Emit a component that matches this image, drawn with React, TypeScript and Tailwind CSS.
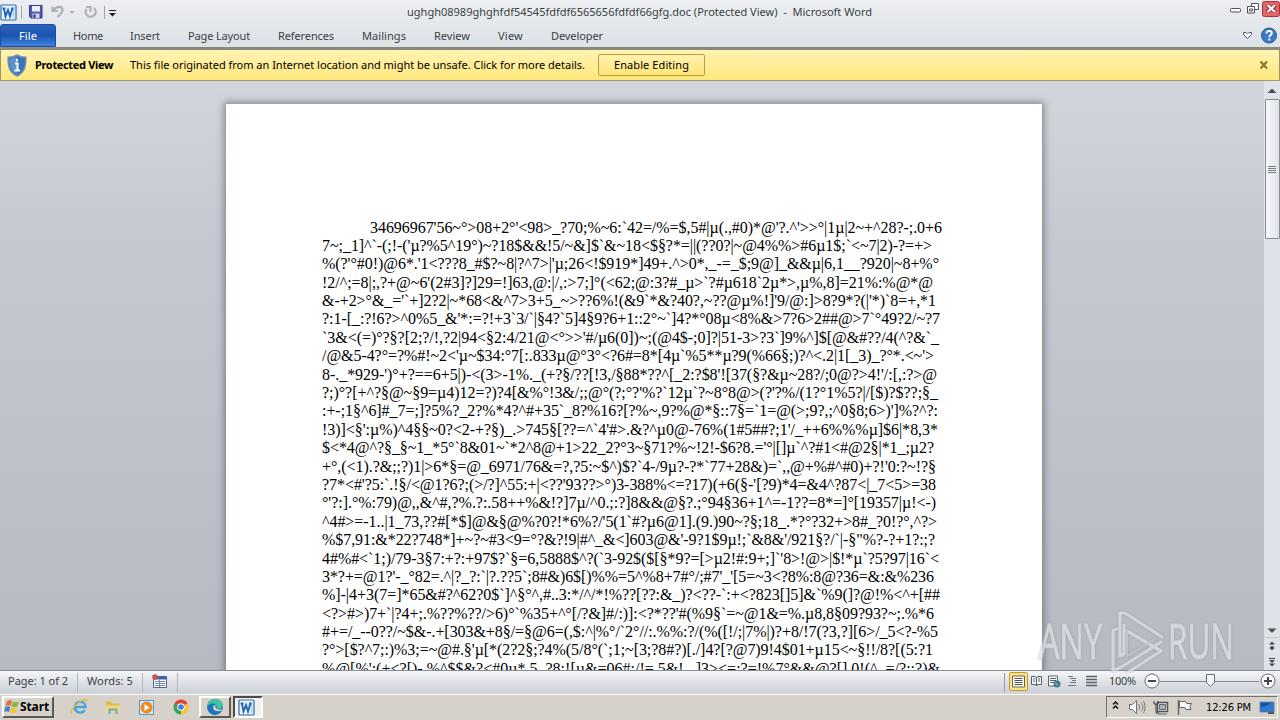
import React, { useLayoutEffect, useRef, useState } from 'react';

interface FitProps {
  text: string;
  width: number;
  className?: string;
}

// Tracks a single line of text so that it fills the given width
const Fit: React.FC<FitProps> = ({ text, width, className = '' }) => {
  const ref = useRef<HTMLSpanElement>(null);
  const [spacing, setSpacing] = useState(0);

  useLayoutEffect(() => {
    if (!ref.current) return;
    const natural = ref.current.getBoundingClientRect().width;
    setSpacing((width - natural) / text.length);
  }, [text, width]);

  return (
    <span
      ref={ref}
      className={`inline-block shrink-0 whitespace-pre ${className}`}
      style={{ letterSpacing: `${spacing}px` }}
    >
      {text}
    </span>
  );
};

interface Line {
  text: string;
  width: number;
}

const LINES: Line[] = [
  { text: "34696967'56~°>08+2°'<98>_?70;%~6:`42=/%=$,5#|µ(.,#0)*@'?.^'>>°|1µ|2~+^28?-;.0+6", width: 572 },
  { text: "7~;_1]^`-(;!-('µ?%5^19°)~?18$&&!5/~&]$`&~18<$§?*=||(??0?|~@4%%>#6µ1$;`<~7|2)-?=+>", width: 610 },
  { text: "%(?'°#0!)@6*.'1<???8_#$?~8|?^7>|'µ;26<!$919*]49+.^>0*,_-=_$;9@]_&&µ|6,1__?920|~8+%°", width: 617 },
  { text: "!2/^;=8|;,?+@~6'(2#3]?]29=!]63,@:|/,:>7;]°(<62;@:3?#_µ>`?#µ618`2µ*>,µ%,8]=21%:%@*@", width: 611 },
  { text: "&-+2>°&_='`+]2?2|~*68<&^7>3+5_~>??6%!(&9`*&?40?,~??@µ%!]'9/@:]>8?9*?(|'*)`8=+,*1", width: 614 },
  { text: "?:1-[_:?!6?>^0%5_&'*:=?!+3`3/`|§4?`5]4§9?6+1::2°~`]4?*°08µ<8%&>7?6>2##@>7`°49?2/~?7", width: 618 },
  { text: "`3&<(=)°?§?[2;?/!,?2|94<§2:4/21@<°>>'#/µ6(0])~;(@4$-;0]?|51-3>?3`]9%^]$[@&#??/4(^?&`_", width: 617 },
  { text: "/@&5-4?°=?%#!~2<'µ~$34:°7[:.833µ@°3°<?6#=8*[4µ`%5**µ?9(%66§;)?^<.2|1[_3)_?°*.<~'>", width: 612 },
  { text: "8-._*929-')°+?==6+5|)-<(3>-1%._(+?§/??[!3,/§88*??^[_2:?$8'![37(§?&µ~28?/;0@?>4!'/:[,:?>@", width: 615 },
  { text: "?;)°?[+^?§@~§9=µ4)12=?)?4[&%°!3&/;;@°(?;°?'%?`12µ`?~8°8@>(?'?%/(1?°1%5?|/[$)?$??;§_", width: 616 },
  { text: ":+-;1§^6]#_7=;]?5%?_2?%*4?^#+35`_8?%16?[?%~,9?%@*§::7§=`1=@(>;9?,;^0§8;6>)']%?^?:", width: 616 },
  { text: "!3)]<§':µ%)^4§§~0?<2-+?§)_.>745§[??=^`4'#>.&?^µ0@-76%(1#5##?;1'/_++6%%%µ]$6|*8,3*", width: 616 },
  { text: "$<*4@^?§_§~1_*5°`8&01~`*2^8@+1>22_2?°3~§71?%~!2!-$6?8.='°|[]µ`^?#1<#@2§|*1_;µ2?", width: 612 },
  { text: "+°,(<1).?&;;?)1|>6*§=@_6971/76&=?,?5:~$^)$?`4-/9µ?-?*`77+28&)=`,,@+%#^#0)+?!'0:?~!?§", width: 614 },
  { text: "?7*<#'?5:`.!§/<@1?6?;(>/?]^55:+|<??'93??>°)3-388%<=?17)(+6(§-'[?9)*4=&4^?87<|_7<5>=38", width: 614 },
  { text: "°'?:].°%:79)@,,&^#,?%.?:.58++%&!?]7µ/^0.;:?]8&&@§?.;°94§36+1^=-1??=8*=]°[19357|µ!<-)", width: 614 },
  { text: "^4#>=-1..|1_73,??#[*$]@&§@%?0?!*6%?/'5(1`#?µ6@1].(9.)90~?§;18_.*?°?32+>8#_?0!?°,^?>", width: 615 },
  { text: "%$7,91:&*22?748*]+~?~#3<9=°?&?!9|#^_&<]603@&'-9?1$9µ!;`&8&'/921§?/`|-§\"%?-?+1?:;?", width: 613 },
  { text: "4#%#<`1;)/79-3§7:+?:+97$?`§=6,5888$^?(`3-92$($[§*9?=[>µ2!#:9+;]`'8>!@>|$!*µ`?5?97|16`<", width: 617 },
  { text: "3*?+=@1?'-_°82=.^|?_?:`|?.??5`;8#&)6$[)%%=5^%8+7#°/;#7'_'[5=~3<?8%:8@?36=&:&%236", width: 612 },
  { text: "%]-|4+3(7=]*65&#?^62?0$`]^§°^,#..3:*/^/*!%??[??:&_)?<??-`:+<?823[]5]&`%9(]?@!%<^+[##", width: 618 },
  { text: "<?>#>)7+`|?4+;.%??%??/>6)°`%35+^°[/?&]#/:)]:<?*??'#(%9§`=~@1&=%.µ8,8§09?93?~;.%*6", width: 612 },
  { text: "#+=/_--0??/~$&-.+[303&+8§/=§@6=(,$:^|%°/`2°//:.%%:?/(%([!/;|7%|)?+8/!7(?3,?][6>/_5<?-%5", width: 616 },
  { text: "?°>[$?^7;:)%3;=~@#.§'µ[*(2?2§;?4%(5/8°(`;1;~[3;?8#?)[./]4?[?@7)9!4$01+µ15<~§!!/8?[(5:?1", width: 611 },
  { text: "%@[%':(+<?[)-.%^$$&?<#0µ*.5_?8:![µ&=06#:/!=.5&!_.]3><=:?=!%7°&&@?[],0!(^_=/?:;?)&", width: 618 },
];

const TABS = [
  { label: 'Home', width: 30, gap: 'ml-[17px]' },
  { label: 'Insert', width: 30, gap: 'ml-[27px]' },
  { label: 'Page Layout', width: 62, gap: 'ml-[28px]' },
  { label: 'References', width: 56, gap: 'ml-[28px]' },
  { label: 'Mailings', width: 44, gap: 'ml-[28px]' },
  { label: 'Review', width: 36, gap: 'ml-[28px]' },
  { label: 'View', width: 25, gap: 'ml-[28px]' },
  { label: 'Developer', width: 52, gap: 'ml-[28px]' },
];

const WordIcon = () => (
  <svg width="17" height="17" viewBox="0 0 17 17" className="shrink-0">
    <rect x="1" y="1" width="15" height="15" rx="1" fill="#eef6fd" stroke="#2f66b0" strokeWidth="1.2" />
    <path d="M13.500 3v11" stroke="#a8c6e8" strokeWidth="1.500" />
    <path d="M2.500 4.500h3M11 4.500h2.500M4 4.500l1.500 8L8 6l2 6.500 2.300-8" fill="none" stroke="#1f66bb" strokeWidth="1.900" />
  </svg>
);

const TitleBar = () => (
  <div className="flex h-6 shrink-0 items-center">
    <WordIcon />
    <div className="ml-1 h-[13px] w-px bg-[#a3a7ab]" />
    <svg width="90" height="22" viewBox="0 0 90 22" className="ml-[4px] mb-px shrink-0">
      <path d="M3.5 4.500h12.500v12.500h-11l-1.500-1.500z" fill="#5657b2" stroke="#35368a" />
      <path d="M6 5h8v5.500h-8z" fill="#edf1fb" />
      <path d="M6.500 12.500h7v4.500h-7z" fill="#c8cee8" />
      <path d="M7.500 13.500h2v3.500h-2z" fill="#33357c" />
      <path d="M26.500 5.500v4.500h5.500M27 9.500c4-5 9.500-4.500 9.500-.5 0 2.500-2 4.500-5 7" fill="none" stroke="#adb0b4" strokeWidth="2.200" />
      <path d="M43.500 10h5l-2.500 3z" fill="#a9acb0" />
      <path d="M60 6h4.500v5M68 7a5 5 0 1 1-7.500 1" fill="none" stroke="#adb0b4" strokeWidth="2.200" />
      <path d="M78.500 5v13" stroke="#a3a7ab" />
      <path d="M83 9.500h7" stroke="#222" />
      <path d="M83 12h7l-3.500 3.500z" fill="#222" />
    </svg>
    <Fit
      text="ughgh08989ghghfdf54545fdfdf6565656fdfdf66gfg.doc (Protected View)  -  Microsoft Word"
      width={465}
      className="ml-[291px] text-[11px] text-[#3b3f44]"
    />
    <svg width="52" height="22" viewBox="0 0 52 22" className="ml-auto shrink-0">
      <rect x="2.500" y="7.500" width="10" height="3.500" rx="1" fill="#fff" stroke="#4d5257" />
      <path d="M23.500 2.500h7v6h-7z" fill="#fff" stroke="#4d5257" />
      <path d="M19.500 5.500h7v6.500h-7z" fill="#fff" stroke="#4d5257" />
      <path d="M21.500 8h3v2h-3z" fill="none" stroke="#4d5257" />
      <rect x="34.500" y=".5" width="17" height="15" rx="2" fill="#e0666b" stroke="#a5343a" />
      <path d="M39 4l8.500 7M47.500 4L39 11" stroke="#8a3034" strokeWidth="4" />
      <path d="M39.500 4l7.500 7M47 4l-7.500 7" stroke="#fff" strokeWidth="2.200" />
    </svg>
  </div>
);

const Ribbon = () => (
  <div className="flex h-[23px] shrink-0 items-center text-[11px] text-[#3b3f44]">
    <div className="flex h-full w-[56px] items-center justify-center rounded-t-[3px] border border-[#1d4ea3] bg-linear-to-b from-[#2d63bd] via-[#1c55b0] to-[#3f83df] pt-px text-white">
      <Fit text="File" width={18} />
    </div>
    {TABS.map((tab) => (
      <Fit key={tab.label} text={tab.label} width={tab.width} className={`pt-[2px] ${tab.gap}`} />
    ))}
    <svg width="40" height="20" viewBox="0 0 40 20" className="ml-auto mr-[1px] shrink-0">
      <path d="M4.500 6.500h2.500l1.500 1.500 1.500-1.500h2.500v2l-4 4-4-4z" fill="#fff" stroke="#50565c" />
      <circle cx="30" cy="9.500" r="7.500" fill="#3c78c8" stroke="#285a9d" />
      <path d="M27.500 7.500c0-3.500 5.300-3 5.300-.4 0 2-2.500 2-2.500 4.200M30.300 12.500v2" fill="none" stroke="#fff" strokeWidth="2" />
    </svg>
  </div>
);

const ProtectedBar = () => (
  <div className="flex h-[34px] shrink-0 items-center border-x border-b border-t-[3px] border-x-[#9a9370] border-b-[#9f9a78] border-t-[#8b897c] bg-linear-to-b from-[#fff3b3] to-[#ffe87a] text-[11px] text-black">
    <svg width="20" height="23" viewBox="0 0 20 23" className="ml-[6px] shrink-0">
      <path d="M10 .8c3 2 6 2.500 9 2.500 0 9-1 15-9 18.700C2 18.300 1 12.300 1 3.300c3 0 6-.5 9-2.500z" fill="#3974b9" stroke="#7c95b4" strokeWidth="1.400" />
      <path d="M10 2.500v18C4 17 2.500 12 2.500 4.800 5 4.500 8 4 10 2.500z" fill="#5d92cd" />
      <path d="M10 5v2.500M8 9.500h2.500V16M7.500 16.500h5.500" fill="none" stroke="#fff" strokeWidth="2" />
    </svg>
    <Fit text="Protected View" width={78} className="ml-[8px] font-bold" />
    <Fit
      text="This file originated from an Internet location and might be unsafe. Click for more details."
      width={455}
      className="ml-[17px]"
    />
    <div className="ml-[13px] flex h-[22px] w-[107px] items-center justify-center rounded-[2px] border border-[#b69a45] bg-linear-to-b from-[#fff2ae] to-[#ffe676]">
      <Fit text="Enable Editing" width={75} />
    </div>
    <svg width="10" height="10" viewBox="0 0 10 10" className="ml-auto mr-[10px]">
      <path d="M1.500 1.500l6.500 7M8 1.500L1.500 8.500" stroke="#897923" strokeWidth="2.200" />
    </svg>
  </div>
);

const ScrollBar = () => (
  <div className="flex w-4 shrink-0 flex-col items-center bg-[#dfe3e9] pt-[2px]">
    <svg width="16" height="16" viewBox="0 0 16 16">
      <path d="M3.500 10h9L8 5.500z" fill="#4b5055" />
    </svg>
    <div className="flex h-[140px] w-[15px] flex-col items-center justify-center gap-px rounded-[1px] border border-[#858b95] bg-linear-to-r from-[#f6f7f9] to-[#dfe2e8]">
      {[0, 1, 2, 3].map((n) => (
        <div key={n} className="h-px w-2 bg-[#777d86]" />
      ))}
    </div>
    <svg width="16" height="50" viewBox="0 0 16 50" className="mt-auto">
      <path d="M3.500 8.500h9L8 13z" fill="#4b5055" />
      <path d="M0 17.500h16" stroke="#c2c6cd" />
      <path d="M5 24.500l3-3 3 3zM5 28.500l3-3 3 3zM7 28h2v2H7zM5 40h6l-3 3zM5 43.500h6l-3 3zM5 38h6v1H5z" fill="#3f444a" />
    </svg>
  </div>
);

const Workspace = () => (
  <div className="flex min-h-0 flex-1 overflow-hidden bg-linear-to-b from-[#d2d6dc] via-[#c6c9d1] via-25% to-[#b5bac3]">
    <div className="min-w-0 flex-1 pl-[226px] pt-[23px]">
      <div className="h-[700px] w-[816px] bg-white pl-[96px] pt-[114.500px] font-['Liberation_Serif',serif] text-[16px] leading-[18.400px] text-black shadow-[0_0_7px_2px_rgba(70,75,90,0.55)]">
        {LINES.map((line, i) => (
          <div key={i} className={`flex h-[18.400px] ${i === 0 ? 'pl-12' : ''}`}>
            <Fit text={line.text} width={line.width} />
          </div>
        ))}
      </div>
    </div>
    <ScrollBar />
  </div>
);

const Watermark = () => (
  <svg width="208" height="68" viewBox="0 0 208 68" className="absolute left-[1036px] top-[605px] opacity-70">
    <g
      fill="#e3e5e8"
      stroke="#dcdfe3"
      strokeWidth="1.200"
      fontFamily="'Open Sans', sans-serif"
      fontSize="50"
      className="drop-shadow-[0_0_1px_#8f949c]"
    >
      <text x="3" y="54" textLength="63" lengthAdjust="spacingAndGlyphs">ANY</text>
      <text x="132" y="54" textLength="66" lengthAdjust="spacingAndGlyphs">RUN</text>
    </g>
    <g fill="none" strokeLinejoin="round" strokeLinecap="round" className="drop-shadow-[0_0_1px_#8f949c]">
      <path d="M81 24c-4 0-4 1-4 5v37l10-5 38-24" stroke="#dfe1e4" strokeWidth="3.200" />
      <path d="M84 51V8l5 0 37 24M84 51l4-2V20M91 26l34 20-37 24" stroke="#dfe1e4" strokeWidth="3.200" />
      <path d="M91 26v25l28-17" stroke="#c4c8cd" strokeWidth="2" />
    </g>
  </svg>
);

const StatusBar = () => (
  <div className="flex h-6 shrink-0 items-center border-t border-[#858b94] bg-linear-to-b from-[#f6f7f9] via-[#dde0e5] to-[#cdd1d8] text-[11px] text-[#3b3f44]">
    <Fit text="Page: 1 of 2" width={60} className="mb-[2px] ml-[8px]" />
    <div className="ml-[9px] h-[19px] w-px bg-[#b0b4bb]" />
    <Fit text="Words: 5" width={46} className="mb-[2px] ml-[9px]" />
    <div className="ml-[9px] h-[19px] w-px bg-[#b0b4bb]" />
    <svg width="16" height="15" viewBox="0 0 16 15" className="mb-[3px] ml-[9px]">
      <path d="M1.500 2.500h13v11h-13z" fill="#fff" stroke="#4e6396" />
      <path d="M2 3h12v2.500H2z" fill="#3a62b4" />
      <path d="M3 7.500h10M3 9.500h10M3 11.500h10M7.500 6v7" stroke="#7488b0" />
      <circle cx="3" cy="3" r="2.800" fill="#cf5443" />
    </svg>
    <div className="ml-[9px] h-[19px] w-px bg-[#b0b4bb]" />
    <div className="ml-auto mr-[4px] h-[19px] w-px bg-[#9a9fa8]" />
    <div className="mb-[2px] flex size-[19px] items-center justify-center rounded-[2px] border border-[#c29837] bg-[#ffe38b]">
      <svg width="13" height="13" viewBox="0 0 13 13">
        <path d="M.5 1h12v11H.5z" fill="#fff" stroke="#6d6545" />
        <path d="M2.500 3.500h8M2.500 5.500h8M2.500 7.500h8M2.500 9.500h8" stroke="#555" />
      </svg>
    </div>
    <svg width="72" height="16" viewBox="0 0 72 16" className="mb-[3px] ml-[2px]">
      <path d="M1.500 3.500h3.500l1.500 1 1.500-1h3.500v8H8l-1.500 1-1.500-1H1.500zM6.500 4v9M3 6h2M3 8h2M8 6h2M8 8h2" fill="#f5f6f7" stroke="#596067" />
      <path d="M18.500 3h9v10h-9z" fill="#fff" stroke="#596067" />
      <path d="M20 5.500h6M20 7.500h6M20 9.500h4" stroke="#596067" />
      <circle cx="27" cy="11" r="3.500" fill="#3e7c91" />
      <path d="M25 10l3 2" stroke="#9ad08b" />
      <path d="M38 3.500h5M40 5.500h6M42 7.500h4M40 9.500h6M38 12.500h8" stroke="#70767c" />
      <path d="M56 3.500h11M56 6.500h11M56 9.500h11M56 12.500h11" stroke="#596067" strokeWidth="1.300" />
    </svg>
    <Fit text="100%" width={27} className="mb-[2px] ml-[7px]" />
    <svg width="136" height="20" viewBox="0 0 136 20" className="mb-[3px] ml-[6px] mr-[2px] shrink-0">
      <path d="M18 10.500h99" stroke="#858b94" />
      <circle cx="10" cy="10" r="7" fill="#fafbfc" stroke="#646a72" />
      <path d="M6 10h8" stroke="#42474d" strokeWidth="2" />
      <path d="M64.500 3.500h8v8l-4 4-4-4z" fill="#f3f4f5" stroke="#6a7078" />
      <circle cx="126" cy="10" r="7" fill="#fafbfc" stroke="#646a72" />
      <path d="M122 10h8M126 6v8" stroke="#42474d" strokeWidth="2" />
    </svg>
  </div>
);

const Taskbar = () => (
  <div className="flex h-[26px] shrink-0 items-center border-t border-white bg-[#d6d2ca] text-[11px] text-black">
    <div className="mb-px ml-[2px] flex h-[22px] w-[52px] items-center border-2 border-b-[#5d5a56] border-l-white border-r-[#5d5a56] border-t-white">
      <svg width="16" height="16" viewBox="0 0 16 16" className="shrink-0">
        <path d="M3 2.500c2-1.500 3-1.500 5-.3L6.500 7C4.500 6 3.500 6 1.500 7z" fill="#e56b32" />
        <path d="M9 2.500c2 1 4 1.200 6 0L13.500 7.500c-2 1-4 1-6-.2z" fill="#84b840" />
        <path d="M1.300 8c2-1 3-1 5 0L5 13c-2-1-3.500-1-5 0z" fill="#4383c8" />
        <path d="M7.300 8.500c2 1 4 1.200 6 0L12 13.500c-2 1-4 1-6 0z" fill="#f4c539" />
      </svg>
      <Fit text="Start" width={29} className="font-['Noto_Sans',sans-serif] text-[12px] font-bold" />
    </div>
    <svg width="128" height="20" viewBox="0 0 128 20" className="mb-px ml-[16px] shrink-0">
      <path d="M4.500 10h11c0-7-10.500-7-10.500 0 0 6.500 7.500 7 9.500 3" fill="none" stroke="#43a7de" strokeWidth="2.500" />
      <path d="M2 16c-3 1 1-6 6-10s10-5 8-1" fill="none" stroke="#e4b83f" strokeWidth="1.300" />
      <path d="M36 4.500h5l1 2h7v4H36z" fill="#e0b94c" />
      <path d="M36 8.500h14v7H36z" fill="#f5da78" />
      <path d="M39.500 17v-4.500h7V17" fill="none" stroke="#67aacf" strokeWidth="2" />
      <rect x="69.500" y="3.500" width="14" height="14" fill="#d4e8f5" stroke="#569acb" />
      <circle cx="76.500" cy="10.500" r="6" fill="#ef8c20" />
      <path d="M74.500 7l5 3.500-5 3.500z" fill="#fff" />
      <path d="M111 10L117.500 6.200A7.500 7.500 0 0 1 111 17.500z" fill="#f4c53b" />
      <path d="M111 10V17.500A7.500 7.500 0 0 1 104.500 6.200z" fill="#38a35a" />
      <path d="M111 10L104.500 6.200A7.500 7.500 0 0 1 117.500 6.200z" fill="#dc4435" />
      <circle cx="111" cy="10" r="3.800" fill="#fff" />
      <circle cx="111" cy="10" r="2.800" fill="#3e7fdd" />
    </svg>
    <div className="mb-px ml-[1px] flex h-[22px] w-[32px] items-center justify-center border-2 border-b-[#5d5a56] border-l-white border-r-[#5d5a56] border-t-white">
      <svg width="18" height="18" viewBox="0 0 18 18">
        <circle cx="9" cy="9" r="8" fill="#1b75bd" />
        <path d="M1 9C1 3 6 1 9 1c5 0 8 3 8 6.500 0 3-4 4-6.500 3 1-3-1-5-4-5C3.500 5.500 2 7 1 9z" fill="#43c4a1" />
        <path d="M10 7c-1 1-1 3 1 4 2 1 4 1 6 0v1c-6 3-10 0-10-2 0-2 1-3 3-3z" fill="#d6d2ca" />
      </svg>
    </div>
    <div className="mb-px ml-[2px] flex h-[22px] w-[30px] items-center justify-center border-2 border-b-white border-l-[#4d4b48] border-r-white border-t-[#4d4b48] bg-[#f2f0ed] pr-[3px]">
      <WordIcon />
    </div>
    <div className="mb-px ml-auto mr-[2px] flex h-[22px] w-[172px] items-center border border-b-white border-l-[#77736b] border-r-white border-t-[#77736b]">
      <svg width="82" height="20" viewBox="0 0 82 20" className="ml-[4px] shrink-0">
        <path d="M2 7.500L4.500 5 7 7.500M2 11.500L4.500 9 7 11.500" fill="none" stroke="#111" strokeWidth="1.500" />
        <path d="M18.500 7.500h3l4-4v13l-4-4h-3z" fill="#fff" stroke="#6d7175" />
        <path d="M27.500 7c1.500 2 1.500 4 0 6M30 5.500c2.500 3 2.500 6 0 9M32.500 4c2 4 2 8 0 12" fill="none" stroke="#777b7e" />
        <path d="M46.500 5.500h10v9h-10z" fill="#e4e8e9" stroke="#4f5458" strokeWidth="1.500" />
        <path d="M48.500 7.500h6v5h-6zM47 17h9" fill="#a6b1b5" stroke="#666" />
        <path d="M43 4v3h4V4M45 7v9h3" fill="none" stroke="#34383b" />
        <path d="M67.500 3v15" stroke="#61666a" strokeWidth="1.500" />
        <path d="M68.500 4.500h6l1 2h5l-1.500 3 1 3h-5l-1-2h-5.500z" fill="#fff" stroke="#61666a" />
      </svg>
      <Fit text="12:26 PM" width={45} className="ml-[13px] pt-[2px] font-['DejaVu_Sans_Condensed','DejaVu_Sans',sans-serif]" />
      <svg width="17" height="16" viewBox="0 0 17 16" className="ml-[8px] shrink-0">
        <path d="M1 3h14v10H1z" fill="#1555a5" stroke="#6c92b8" />
        <path d="M2 8c6 0 8-4 12-4v8H2z" fill="#3278ce" />
        <path d="M9 14h6" stroke="#555" strokeWidth="2" />
      </svg>
    </div>
  </div>
);

const App: React.FC = () => {
  return (
    <div className="relative flex h-[720px] w-[1280px] flex-col overflow-hidden bg-linear-to-b from-[#eceef1] to-[#dce2e6] to-[47px] font-['Noto_Sans','Open_Sans',sans-serif]">
      <TitleBar />
      <Ribbon />
      <ProtectedBar />
      <Workspace />
      <StatusBar />
      <Taskbar />
      <Watermark />
    </div>
  );
};

export default App;
